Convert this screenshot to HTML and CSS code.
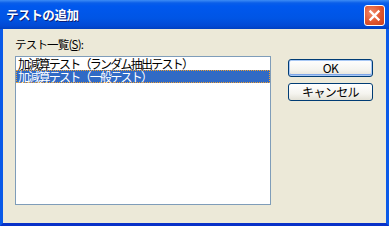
FILE: index.html
```html
<!DOCTYPE html>
<html lang="ja">
<head>
<meta charset="utf-8">
<link rel="stylesheet" href="styles.css">
</head>
<body>
<div class="window">
  <div class="titlebar">
    <span class="title">テストの追加</span>
    <span class="close">
      <svg width="13" height="13" viewBox="0 0 13 13"><path d="M2.5 2.5 L10.5 10.5 M10.5 2.5 L2.5 10.5" stroke="#fff" stroke-width="2.4" stroke-linecap="square"/></svg>
    </span>
  </div>
  <div class="client">
    <div class="left">
      <div class="label">テスト一覧(<u>S</u>):</div>
      <div class="listbox">
        <div class="item">加減算テスト（ランダム抽出テスト）</div>
        <div class="item selected">加減算テスト（一般テスト）</div>
      </div>
    </div>
    <div class="right">
      <button class="btn default">OK</button>
      <button class="btn">キャンセル</button>
    </div>
  </div>
</div>
</body>
</html>
```
FILE: styles.css
```css
html, body { margin: 0; padding: 0; }
body { width: 389px; height: 226px; overflow: hidden; font-family: "Noto Sans CJK JP", sans-serif; }
.window { width: 389px; height: 226px; display: flex; flex-direction: column; background: #0855dd; }
.titlebar {
  height: 29px; box-sizing: border-box; display: flex; align-items: center; justify-content: space-between;
  padding: 0 4px 0 6px;
  background: linear-gradient(to bottom, #3d8cf5 0px, #0a5ee9 3px, #0058ee 6px, #0055e5 18px, #0249d4 26px, #0040c0 29px);
}
.title { color: #fff; font-weight: bold; font-size: 12.5px; letter-spacing: -0.4px; text-shadow: 1px 1px 0 #0a1e7a; line-height: 14px; }
.close {
  width: 21px; height: 21px; box-sizing: border-box; border: 1px solid #fff; border-radius: 3px;
  background: radial-gradient(circle at 35% 35%, #f08a6a 0%, #e0552e 55%, #c8401c 100%);
  display: flex; align-items: center; justify-content: center; margin-top: 2px;
}
.client {
  flex: 1; background: #ece9d8; border: 3px solid #0a5ae8; border-top: 0; border-bottom-color: #0831c8;
  display: flex; gap: 17px; padding: 0 0 0 12px;
}
.left { display: flex; flex-direction: column; padding-top: 8px; }
.label { font-size: 11.5px; line-height: 14px; color: #000; height: 14px; margin-bottom: 5px; letter-spacing: -0.8px; }
.label u { text-decoration: underline; }
.listbox { width: 256px; height: 149px; box-sizing: border-box; border: 1px solid #7f9db9; background: #fff; }
.item { height: 13px; line-height: 13px; font-size: 12px; padding-left: 2px; color: #000; white-space: nowrap; letter-spacing: -1.75px; box-sizing: border-box; }
.item.selected { background: #316ac5; color: #fff; outline: 1px dotted #f0a030; outline-offset: -1px; }
.right { display: flex; flex-direction: column; gap: 6px; padding-top: 30px; }
.btn {
  width: 85px; height: 18px; box-sizing: border-box; border: 1px solid #003c74; border-radius: 3px;
  background: linear-gradient(to bottom, #ffffff 0%, #f5f4ef 60%, #e3e1d6 100%);
  font-family: "Noto Sans CJK JP", sans-serif; font-size: 12px; line-height: 14px; padding: 0; color: #000; letter-spacing: -0.6px;
}
.btn.default { box-shadow: inset 0 0 0 1px #a8c8f5, inset 0 -1px 0 1px #7ea6e8; }
```
